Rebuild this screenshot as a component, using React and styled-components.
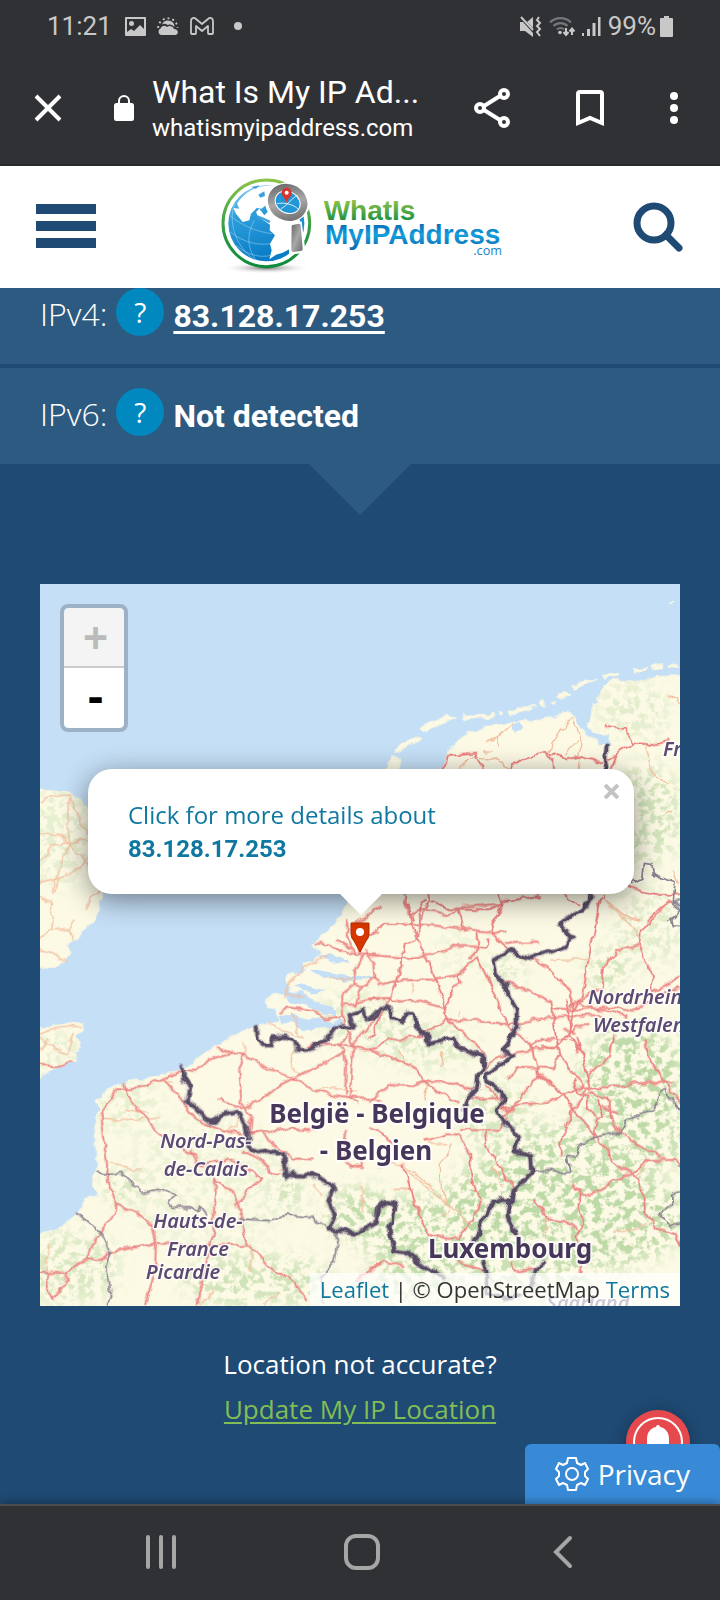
import React from "react";
import styled, { createGlobalStyle } from "styled-components";

const c = {
  chrome: "#303135",
  status: "#c8c8c8",
  navy: "#1f4a73",
  panel: "#2d5a80",
  blue: "#0088bf",
  link: "#0f78a0",
  green: "#82bd56",
};

const Global = createGlobalStyle`
  * { box-sizing: border-box; }
  html, body { margin: 0; padding: 0; }
  body { background: ${c.navy}; font-family: "Open Sans", "Noto Sans", sans-serif; color: #fff; }
  button { border: 0; padding: 0; background: none; font: inherit; color: inherit; cursor: pointer; }
  p, dl, dt, dd { margin: 0; }
  svg { display: block; }
`;

const Screen = styled.div`
  display: flex;
  flex-direction: column;
  min-height: 100vh;
`;

const Chrome = styled.header`
  background: ${c.chrome};
  border-bottom: 2px solid #28292c;
  font-family: Roboto, "Liberation Sans", sans-serif;
`;

const StatusBar = styled.div`
  display: flex;
  align-items: center;
  height: 50px;
  padding: 2px 47px 0 47px;
  color: ${c.status};
  font-size: 26px;
  line-height: 32px;
`;

const StatusIcons = styled.div`
  display: flex;
  align-items: center;
  gap: ${(p) => p.$gap}px;
  margin-left: ${(p) => (p.$end ? "auto" : "13px")};
`;

const BatteryLevel = styled.span`
  display: flex;
  align-items: center;
  gap: 4px;
`;

const Toolbar = styled.div`
  display: flex;
  align-items: center;
  height: 114px;
  padding: 2px 42px 0 34px;
`;

const SiteInfo = styled.button`
  display: flex;
  align-items: center;
  margin-left: 52px;
  margin-right: 18px;
`;

const Titles = styled.div`
  flex: 1;
  min-width: 0;
  padding-top: 2px;
`;

const PageTitle = styled.div`
  font-size: 32px;
  line-height: 38px;
  white-space: nowrap;
`;

const PageHost = styled.div`
  font-size: 24px;
  line-height: 34px;
`;

const Actions = styled.div`
  display: flex;
  align-items: center;
  gap: 66px;
`;

const SiteHeader = styled.div`
  display: flex;
  align-items: center;
  justify-content: space-between;
  height: 122px;
  padding: 0 37px 0 36px;
  background: #fff;
`;

const Bars = styled.button`
  display: flex;
  flex-direction: column;
  gap: 7px;
  width: 60px;
  margin-top: -2px;
`;

const Bar = styled.span`
  height: 10px;
  background: ${c.navy};
`;

const LogoArt = styled.svg`
  margin-right: 10px;
`;

const Content = styled.main`
  position: relative;
  flex: 1;
  display: flex;
  flex-direction: column;
`;

const Addresses = styled.dl`
  display: flex;
  flex-direction: column;
  gap: 4px;
`;

const AddressRow = styled.div`
  display: flex;
  align-items: center;
  gap: 9px;
  padding: ${(p) => (p.$first ? 0 : 20)}px 40px 28px;
  background: ${c.panel};
  line-height: 48px;
`;

const AddressLabel = styled.dt`
  padding-top: 4px;
  font-size: 32px;
  line-height: 44px;
  font-weight: 350;
`;

const Help = styled.button`
  width: 48px;
  height: 48px;
  border-radius: 50%;
  background: ${c.blue};
  font-size: 28px;
  line-height: 48px;
`;

const AddressValue = styled.dd`
  padding-top: 8px;
  font-family: Roboto, "Liberation Sans", sans-serif;
  font-size: 32px;
  line-height: 40px;
  font-weight: 700;
  a {
    color: inherit;
    text-decoration-thickness: 3px;
    text-underline-offset: 4px;
    text-decoration-skip-ink: none;
  }
`;

const Arrow = styled.div`
  align-self: center;
  width: 102px;
  height: 51px;
  background: ${c.panel};
  clip-path: polygon(0 0, 100% 0, 50% 100%);
`;

const MapBox = styled.section`
  position: relative;
  height: 722px;
  margin: 69px 40px 0;
  overflow: hidden;
  background: #c5dff6;
`;

const MapArt = styled.svg`
  width: 100%;
  height: 100%;
`;

const ZoomControl = styled.div`
  position: absolute;
  top: 20px;
  left: 20px;
  display: flex;
  flex-direction: column;
  border: 4px solid rgba(0, 0, 0, 0.2);
  border-radius: 8px;
  background-clip: padding-box;
`;

const ZoomButton = styled.button`
  width: 60px;
  height: 60px;
  padding-left: 3px;
  background: #fff;
  color: #000;
  font-family: "DejaVu Sans Mono", monospace;
  font-size: 40px;
  line-height: 58px;
  font-weight: 700;
  border-radius: 0 0 5px 5px;
  &:first-child {
    border-bottom: 2px solid #ccc;
    border-radius: 5px 5px 0 0;
  }
  &:disabled {
    background: #f4f4f4;
    color: #bbb;
  }
`;

const Popup = styled.div`
  position: absolute;
  top: 185px;
  left: 50%;
  width: 546px;
  max-width: 90%;
  padding: 28px 40px 27px;
  margin-left: 1px;
  transform: translateX(-50%);
  border-radius: 24px;
  background: #fff;
  box-shadow: 0 6px 28px rgba(0, 0, 0, 0.45);
  &::after {
    content: "";
    position: absolute;
    top: 100%;
    left: 50%;
    width: 44px;
    height: 22px;
    margin: -1px 0 0 -22px;
    background: #fff;
    clip-path: polygon(0 0, 100% 0, 50% 100%);
  }
`;

const PopupLink = styled.a`
  display: block;
  color: ${c.link};
  font-size: 24px;
  line-height: 35px;
  text-decoration: none;
  strong {
    display: block;
    font-family: Roboto, "Liberation Sans", sans-serif;
    font-size: 24px;
  }
`;

const PopupClose = styled.button`
  position: absolute;
  top: 15px;
  right: 15px;
`;

const Marker = styled.svg`
  position: absolute;
  top: 338px;
  left: 50%;
  width: 20px;
  height: 32px;
  margin-left: -10px;
`;

const Attribution = styled.div`
  position: absolute;
  right: 0;
  bottom: 0;
  padding: 0 10px;
  background: rgba(255, 255, 255, 0.7);
  color: #333;
  font-size: 22px;
  line-height: 33px;
  white-space: nowrap;
  a { color: ${c.link}; text-decoration: none; }
`;

const Accuracy = styled.div`
  padding: 36px 20px 64px;
  text-align: center;
  font-size: 26px;
  line-height: 45px;
  a { color: ${c.green}; text-underline-offset: 3px; }
`;

const Alerts = styled.button`
  position: absolute;
  right: 30px;
  bottom: 30px;
  border-radius: 50%;
  box-shadow: 0 2px 16px rgba(0, 0, 0, 0.3);
`;

const Privacy = styled.button`
  position: absolute;
  right: 0;
  bottom: 0;
  display: flex;
  align-items: center;
  gap: 9px;
  height: 60px;
  padding: 0 30px;
  border-radius: 6px 6px 0 0;
  background: #388ad6;
  font-size: 28px;
`;

const NavBar = styled.nav`
  position: relative;
  display: grid;
  grid-template-columns: repeat(3, 1fr);
  place-items: center;
  height: 96px;
  padding: 0 57px 2px 60px;
  border-top: 2px solid #4a4c4e;
  background: ${c.chrome};
  box-shadow: 0 -2px 8px rgba(0, 0, 0, 0.3);
`;

const Country = styled.text`
  font: 700 26px "Noto Sans", "Open Sans", sans-serif;
  text-anchor: middle;
  fill: #46365a;
  stroke: rgba(255, 255, 255, 0.8);
  stroke-width: 4px;
  stroke-linejoin: round;
  paint-order: stroke;
`;

const Region = styled(Country)`
  font: italic 600 20px "Noto Sans", "Open Sans", sans-serif;
  text-anchor: ${(p) => (p.$start ? "start" : "middle")};
  fill: #5d4a72;
  stroke-width: 3px;
`;

/* Map geometry is drawn at three units per pixel, one sheet per quarter of the map. */
const sheets = [
  {
    at: "translate(0 -12)",
    minor: [
      "M0 665 30 650 90 645 80 700 85 790 50 890 38 935 M0 758 60 765 80 790 144 778 M0 840 35 800 80 790 M90 650 110 700 140 760 M80 790 150 855 M0 910 60 895 110 870 144 835 M60 895 45 930 M0 950 40 975 M135 985 180 920",
    ],
    major: [],
    border: [],
    region: [],
  },
  {
    at: "translate(1020 -12)",
    minor: [
      "M582 410 535 460 510 515 M585 415 600 480 595 565 M322 488 355 470 400 430 M355 470 358 495 M312 512 335 514 M235 565 280 530 M300 536 345 537 385 562 M590 480 560 525 M800 500 C803 575 825 603 862 605 M865 345 885 352 898 380 M880 870 895 910 M680 965 730 1005 780 1020 M850 710 875 695",
    ],
    major: [
      "M188 567 205 525 285 518 305 565 M380 567 430 535 500 518 560 538 610 528 660 547 700 535 715 515 760 490 735 447 695 443 Q670 440 680 435 M500 518 520 545 522 567 M760 490 820 498 862 482 M695 567 710 530 M75 940 80 990 100 1020 M145 945 150 960 205 985 335 988 365 965 480 948 M125 1020 150 960 M355 940 362 970 345 1020 M560 945 565 960 595 970 M740 915 790 935 830 945 900 943 M875 965 840 985 805 1020 M670 945 655 975 650 1020 M232 988 245 1020",
    ],
    border: ["M680 500 675 540 680 570 M632 940 630 955"],
    region: ["M758 910 785 895 790 850 815 853 820 880 865 900 885 905 880 965 890 975 900 978 M868 1020 890 1005"],
  },
  {
    at: "translate(0 948)",
    minor: [
      "M30 0 40 50 35 90 0 115 M35 90 85 85 100 120 M85 85 105 60 M0 150 30 155 80 190 M0 400 60 380 125 380 M0 415 80 465 100 395 M0 450 25 415 M185 655 300 660 355 655 M210 785 250 805 300 812 M255 625 320 635 M370 540 400 545 M735 290 750 250 790 200 870 165 M735 285 795 290 M760 340 775 400 M870 240 940 235 M690 365 720 395 790 410 M760 450 755 500 780 530 M610 425 612 465 M635 1035 630 1115 M25 1035 20 1120 M670 1210 720 1175 M480 1210 525 1170 M965 860 970 940 M735 780 720 810 M550 690 590 680 600 640 M820 850 845 880 M830 570 870 560 950 575",
    ],
    major: [
      "M425 512 360 540 300 562 230 568 188 630 182 655 190 720 200 780 205 860 228 912 220 945 190 980 150 1045 140 1078 85 1110 60 1122 0 1118",
      "M250 550 262 588 300 630 350 690 372 708 440 755 468 760 475 775",
      "M372 540 420 590 450 640 490 670 545 690 610 705 M425 512 470 512 485 495 520 475 575 458 620 470 690 508 760 535 825 572 900 588 930 592 1022 600",
      "M535 445 575 458 M612 468 598 505 605 620 M535 597 575 612 608 625 660 605 720 555 780 525 850 490 912 458 M608 625 635 650 630 700 690 695 760 685 820 688 M630 705 665 695 700 735 755 775 815 778 M608 755 660 775 685 800 690 825 720 820",
      "M228 912 290 940 335 975 348 1030 270 1045 215 1055 180 1080 140 1078 M348 1025 430 1035 618 1035 M525 838 520 990 490 1130 470 1215 M525 838 580 880 605 940 608 985 622 1030 690 1100 780 1160 798 1205 M585 915 660 835 M348 1030 345 1110 318 1215 M200 1075 185 1080",
      "M455 750 475 800 560 775 640 815 660 835 M0 495 60 500 95 485 M20 1120 25 1175 40 1200 M80 1115 80 1145 40 1195",
      "M832 128 870 130 905 155 1020 165 M890 120 940 150 M925 60 920 110 945 155 M960 158 965 110 1020 92 M1020 20 940 75 M975 150 1000 190 1003 235 965 262 940 252 940 225 970 165 M940 252 910 285 908 330 912 380 940 440 935 500 930 590 955 610 M1003 235 1020 245 M965 262 945 315 M720 340 738 322 820 330 858 355 905 350 M912 320 960 305 1020 293 M800 440 880 430 930 440 1020 455 M930 440 1005 360 1020 320 M918 410 900 435 912 455 918 500 915 580 M940 800 905 780 920 690 M930 800 965 800 965 775 M1020 1090 950 1140",
    ],
    border: [
      "M650 378 653 420 665 435 690 436 695 415 735 413 765 428 772 453 805 452 860 422 890 382 M900 378 940 386 928 345 970 330 978 355 1010 352 1025 325",
      "M428 503 432 540 448 555 440 605 470 625 495 655 515 668 528 665 540 645 585 634 605 650 620 680 628 720 630 748 660 757 680 748 730 768 738 835 755 822 830 826 850 840 885 862 865 900 885 945 865 985 950 998 1005 972 1010 930 1022 920",
    ],
    region: [
      "M170 813 190 825 240 820 265 840 305 880 380 872 410 885 385 905 395 922 450 920 480 938 478 915 500 945 M600 957 690 962 740 945 820 952 830 970 885 985 895 1020 885 1085 845 1130 850 1215 M112 940 185 1000 212 1060 200 1100 208 1175 215 1185 205 1215",
    ],
  },
  {
    at: "translate(990 948)",
    minor: [
      "M125 245 128 280 M20 800 100 790 190 865 M160 720 230 740 M245 735 210 800 215 870 240 930 M100 800 170 860 300 970 M215 950 240 930 M70 865 130 865 M540 180 660 175 M700 0 780 70 805 110 M830 975 780 990 735 1000 M215 500 220 450 M90 450 105 490 M525 960 530 1010 M175 540 165 600 M400 860 370 800 M270 335 260 345 M800 830 830 800 M840 780 820 810",
    ],
    major: [
      "M0 105 40 72 135 72 230 80 330 92 M105 0 120 50 140 115 178 190 200 240 228 325 235 360 290 410 345 462 M140 118 105 135 85 220 62 290 32 350 0 415 M155 65 150 30 165 0 M155 65 140 115 M120 50 150 30 230 45 280 20 390 12 395 0 M0 165 90 172 185 165 260 138 350 140 352 115 M320 98 322 150 300 175 M325 95 360 98 400 135 430 160 490 178 550 215 595 270 610 320 600 400 640 470 662 560 M270 30 280 90 M395 10 365 80 370 105 410 92 M410 130 440 125 502 125",
      "M25 255 100 238 200 235 265 225 320 170 355 240 385 310 420 385 482 430 492 470 505 522 570 570 M0 295 62 298 150 305 228 325 M228 325 250 260 272 250 265 225 M145 408 235 358 320 360 400 375 550 350 700 345 M0 450 60 420 160 408 M0 452 60 470 140 510 180 560 260 610 M0 605 60 555 120 558 180 540 320 565 M345 510 360 480 420 460 560 440 620 380 650 375",
      "M385 240 460 265 545 305 560 440 570 460 620 540 660 570 M415 530 450 500 550 505 570 465 M392 628 440 615 540 605 610 570 645 560 M400 650 440 610 505 525 570 570 620 640 690 720 718 755 722 795 790 818 M572 770 575 710 615 620 650 570 M485 440 520 415 590 420 M510 440 560 440 M580 390 620 395",
      "M692 0 672 100 655 180 640 280 612 330 M900 0 860 45 812 95 808 135 740 150 702 200 695 260 600 320 M808 135 845 220 848 275 930 230 M545 325 640 330 720 320 790 335 870 280 930 265 M625 300 640 320 730 335 770 350 M588 300 600 385 M650 525 720 470 730 400 M625 410 655 540 M820 415 845 490 885 545 930 605 M655 562 730 562 800 550 910 543",
      "M610 540 620 575 655 590 650 630 690 655 M660 580 715 595 720 650 740 685 800 730 870 772 M690 600 700 650 680 660 670 720 M700 620 742 635 M790 818 840 780 915 780 930 795 M790 818 725 840 700 870 630 888 610 855 M630 888 620 925 640 970 622 1010 635 1115 M790 818 818 870 825 930 860 985 915 1000 930 1040 M490 893 528 952 580 965 620 985 M620 460 630 440 600 420",
      "M100 790 130 900 175 1000 260 1020 310 960 327 900 305 840 300 760 262 700 230 700 160 722 M345 700 350 740 378 780 410 840 440 868 M270 690 390 692 410 655 M300 595 395 595 M0 1118 40 1080 95 1095 M265 1085 350 1115 M0 685 40 700 65 735 M420 1085 440 1115 500 1105 M345 560 390 595 400 630 430 628",
    ],
    border: [
      "M0 355 30 325 62 325 60 355 100 362 112 335 132 340 135 375 172 408 175 428 250 415 270 445 340 470 338 510 322 525 318 570 290 600 283 625",
      "M668 -8 625 35 605 45 570 75 605 108 590 142 520 160 485 175 418 152 368 182 375 220 410 258 415 285 440 330 440 380 400 450 430 465 400 490 350 522 352 545 400 575 400 605 380 630 400 665 450 710 430 750 480 765 485 825 430 870 425 905 375 900 345 950 310 1025 M418 900 412 945 430 985 445 1008 M0 975 20 968 28 925 55 903 78 908 58 985 72 1055 110 1060 160 1100 195 1115 225 1140 M340 1085 352 1130 350 1170 M522 1088 490 1115 485 1160 M350 1180 400 1195 450 1185",
    ],
    region: [
      "M490 815 545 808 580 822 600 820 592 770 620 768 630 740 665 715 740 698 755 695 765 665 850 630 870 575 890 572 895 590 915 605 930 640 M930 875 905 885 908 915 870 945 900 980 930 975 M930 0 905 10 930 30 905 60 910 80 930 75 M930 800 922 798",
    ],
  },
];

const land = [
  "M1960 273 1850 278 1790 293 1770 289 1720 290 1690 308 1672 338 1685 360 1658 363 1648 433 1662 448 1710 450 1712 488 1672 488 1668 466 1635 448 1622 430 1612 398 1570 390 1500 408 1420 416 1340 428 1270 458 1222 508 1205 560 1180 700 1100 700 1070 560 1078 533 1060 518 1035 553 1020 720 985 850 925 958 880 1028 835 1068 822 1078 840 1108 825 1130 790 1138 795 1160 745 1175 740 1190 755 1215 740 1235 700 1228 675 1253 705 1285 715 1312 690 1313 650 1328 600 1343 520 1393 425 1458 340 1478 230 1503 195 1530 170 1548 180 1573 164 1608 170 1728 158 1803 180 1833 145 1838 115 1888 50 1938 -40 1961 -40 2206 1960 2206Z",
  "M-40 608 80 623 120 648 160 700 190 850 180 948 178 985 165 1013 130 1038 100 1073 75 1085 90 1105 75 1133 35 1151 -40 1138Z",
  "M-40 1343 60 1323 128 1316 130 1338 105 1350 120 1388 108 1428 70 1445 20 1463 -40 1515Z",
  "M1062 505 1080 480 1130 460 1140 470 1105 485 1075 503ZM1142 432 1165 415 1220 398 1250 402 1205 420 1150 443ZM1272 388 1300 395 1365 388 1362 398 1290 405 1270 402ZM1408 382 1440 370 1490 366 1450 382 1410 395ZM1498 355 1513 348 1515 362 1502 364ZM1550 328 1575 322 1592 330 1572 345 1548 336ZM1600 305 1630 290 1672 286 1640 298 1605 314ZM1688 274 1735 268 1740 274 1695 282ZM1775 256 1820 250 1818 258 1780 268ZM1830 248 1868 240 1865 250 1835 255ZM1880 238 1910 238 1914 248 1885 243ZM1535 356 1542 352 1542 362ZM1380 388 1390 387 1388 393ZM1885 56 1898 55 1895 60Z",
];

const inlets =
  "M712 1295 770 1292 800 1305 850 1300 880 1318 900 1300 905 1325 870 1335 830 1330 795 1345 755 1318 720 1318ZM735 1228 790 1225 830 1258 875 1268 895 1298 850 1290 800 1262 745 1252ZM755 1210 800 1202 850 1215 828 1232 780 1220ZM800 1160 850 1155 880 1170 950 1178 1015 1185 960 1190 880 1190 845 1178ZM822 1120 870 1112 920 1130 930 1140 870 1130ZM1080 905 1100 915 1095 935 1078 925ZM1410 425 1440 415 1450 430 1420 445Z";

const forests = [
  [1440, 1860, 230, 150, 1], [1180, 1960, 210, 130, 0.9], [1780, 1480, 160, 160, 1],
  [1700, 1900, 230, 150, 1], [1620, 1720, 200, 110, 0.9], [1850, 1640, 90, 120, 0.9],
  [1370, 1600, 110, 110, 0.6], [1480, 2080, 190, 70, 0.8], [960, 1890, 110, 80, 0.9],
  [1820, 690, 110, 150, 0.65], [1780, 380, 110, 90, 0.4], [1150, 1380, 160, 70, 0.5],
  [1400, 1160, 50, 40, 0.8], [1700, 1160, 60, 60, 0.8], [1830, 1030, 110, 120, 0.4],
  [90, 2050, 150, 110, 0.55], [260, 1560, 110, 90, 0.3], [650, 2090, 230, 80, 0.7],
  [750, 1830, 40, 40, 1], [240, 1810, 50, 40, 0.8], [500, 1800, 260, 200, 0.22],
  [60, 750, 100, 160, 0.35], [950, 1300, 120, 80, 0.4], [50, 1400, 80, 60, 0.35],
  [1100, 2110, 150, 50, 0.9], [1260, 1100, 70, 80, 0.2],
];

function Lines({ d, ...rest }) {
  return d.map((path) => <path key={path} d={path} {...rest} />);
}

function MapDrawing() {
  return (
    <MapArt viewBox="0 0 640 722" preserveAspectRatio="xMidYMid slice" role="img" aria-label="Map of the Low Countries">
      <defs>
        <filter id="woods" x="0" y="0" width="100%" height="100%" colorInterpolationFilters="sRGB">
          <feTurbulence type="fractalNoise" baseFrequency="0.13" numOctaves="4" seed="11" />
          <feColorMatrix values="0 0 0 0 0.74  0 0 0 0 0.85  0 0 0 0 0.65  6 0 0 0 -2.7" />
        </filter>
        <filter id="wander" filterUnits="userSpaceOnUse" x="-20" y="-20" width="680" height="762">
          <feTurbulence type="fractalNoise" baseFrequency="0.09" numOctaves="2" seed="4" result="noise" />
          <feDisplacementMap in="SourceGraphic" in2="noise" scale="8" xChannelSelector="R" yChannelSelector="G" />
        </filter>
        <filter id="feather"><feGaussianBlur stdDeviation="30" /></filter>
        <clipPath id="coast">
          <path transform="scale(0.333333)" d={land.slice(0, 3).join("")} />
        </clipPath>
        <mask id="forestMask" maskUnits="userSpaceOnUse" x="0" y="0" width="640" height="722">
          <g transform="scale(0.333333)" filter="url(#feather)">
            {forests.map(([x, y, rx, ry, o]) => (
              <ellipse key={`${x}-${y}`} cx={x} cy={y} rx={rx} ry={ry} fill="#fff" opacity={o} />
            ))}
          </g>
        </mask>
      </defs>
      <rect width="640" height="722" fill="#c5dff6" />
      <g filter="url(#wander)">
        <g transform="scale(0.333333)">
          <Lines d={land} fill="#fcfae5" stroke="#f3f4e3" strokeWidth="4" strokeLinejoin="round" />
        </g>
      </g>
      <g clipPath="url(#coast)">
        <g mask="url(#forestMask)"><rect width="640" height="722" filter="url(#woods)" /></g>
      </g>
      <g filter="url(#wander)">
        <g transform="scale(0.333333)" fill="none" strokeLinejoin="round" strokeLinecap="round">
          <path d={inlets} fill="#c5dff6" />
          {sheets.map((s) => (
            <g key={s.at} transform={s.at}>
              <Lines d={s.minor} stroke="#f3bfa0" strokeWidth="4" />
              <Lines d={s.major} stroke="#f2a29a" strokeWidth="8" opacity="0.6" />
              <Lines d={s.major} stroke="#ea8080" strokeWidth="4" />
              <Lines d={s.region} stroke="#8b8191" strokeWidth="5" />
              <Lines d={s.border} stroke="#8d8296" strokeWidth="18" opacity="0.45" />
              <Lines d={s.border} stroke="#574b63" strokeWidth="11" />
            </g>
          ))}
        </g>
      </g>
      <Country x="337" y="539">België - Belgique</Country>
      <Country x="336" y="576">- Belgien</Country>
      <Country x="470" y="674">Luxembourg</Country>
      <Region x="166" y="564">Nord-Pas-</Region>
      <Region x="166" y="592">de-Calais</Region>
      <Region x="158" y="644">Hauts-de-</Region>
      <Region x="158" y="672">France</Region>
      <Region x="143" y="695">Picardie</Region>
      <Region $start x="548" y="420">Nordrhein-</Region>
      <Region $start x="553" y="448">Westfalen</Region>
      <Region $start x="623" y="172">Friesland</Region>
      <Region x="548" y="726">Saarland</Region>
    </MapArt>
  );
}

function Logo() {
  return (
    <LogoArt width="290" height="110" viewBox="42 20 870 330" role="img" aria-label="WhatIsMyIPAddress.com">
      <defs>
        <linearGradient id="ring" x1="0" y1="0" x2="0" y2="1">
          <stop offset="0" stopColor="#8bc34a" /><stop offset="0.6" stopColor="#2f9b45" /><stop offset="1" stopColor="#0d8a3c" />
        </linearGradient>
        <linearGradient id="sea" x1="0" y1="0" x2="0.3" y2="1">
          <stop offset="0" stopColor="#9fd4f2" /><stop offset="0.4" stopColor="#2e9fdc" /><stop offset="1" stopColor="#0a7cc6" />
        </linearGradient>
        <linearGradient id="steel" x1="0" y1="0" x2="1" y2="1">
          <stop offset="0" stopColor="#666" /><stop offset="0.5" stopColor="#a8a8a8" /><stop offset="1" stopColor="#6b6b6b" />
        </linearGradient>
        <linearGradient id="wordTop" x1="0" y1="0" x2="0" y2="1">
          <stop offset="0.2" stopColor="#8cc247" /><stop offset="0.9" stopColor="#118c43" />
        </linearGradient>
        <linearGradient id="wordBottom" x1="0" y1="0" x2="0" y2="1">
          <stop offset="0.1" stopColor="#0b64ae" /><stop offset="0.5" stopColor="#12a0dd" /><stop offset="1" stopColor="#0b64ae" />
        </linearGradient>
        <radialGradient id="ground"><stop offset="0" stopColor="#777" /><stop offset="1" stopColor="#fff" stopOpacity="0" /></radialGradient>
      </defs>
      <ellipse cx="196" cy="308" rx="135" ry="17" fill="url(#ground)" />
      <circle cx="196" cy="174" r="130" fill="#fff" stroke="url(#ring)" strokeWidth="9" />
      <circle cx="196" cy="174" r="114" fill="url(#sea)" />
      <path fill="#fff" d="M115 105 C150 62 205 50 245 72 L265 100 290 140 300 180 285 230 265 252 245 262 225 268 205 282 212 255 207 235 222 210 206 195 207 178 192 168 172 156 165 140 175 130 190 150 202 138 194 120 182 130 167 128 150 145 145 165 125 170 105 145 97 128 115 130 108 115Z" />
      <path fill="#3f9fdb" d="M172 88 190 78 192 92 178 97ZM170 150 190 158 208 166 205 174 188 164 170 160ZM150 65 175 60 165 70Z" />
      <g fill="none" stroke="#b5dff5" strokeWidth="2" opacity="0.7">
        <path d="M100 115 C80 180 110 250 160 282 M160 165 C135 210 140 250 165 284 M88 200 C130 235 180 240 210 235 M86 150 C120 180 170 200 212 205 M105 240 C140 270 180 278 210 270" />
      </g>
      <ellipse cx="260" cy="111" rx="68" ry="60" fill="#fff" />
      <ellipse cx="260" cy="111" rx="49" ry="43" fill="#2297d8" stroke="url(#steel)" strokeWidth="23" transform="rotate(28 260 111)" />
      <ellipse cx="260" cy="111" rx="39" ry="32" fill="none" stroke="#fff" strokeWidth="3" transform="rotate(28 260 111)" />
      <path fill="none" stroke="#fff" strokeWidth="3" opacity="0.8" d="M228 115 C250 110 280 118 292 132 M240 130 C260 120 275 95 290 90" />
      <path d="M264 176 302 168 314 262 264 268Z" fill="#fff" />
      <path d="M272 183 Q272 179 278 178 L294 175 Q298 175 299 180 L305 250 Q305 257 299 257 L277 260 Q271 260 271 254Z" fill="url(#steel)" />
      <path d="M257 112 C253 98 242 94 242 82 A15 15 0 0 1 272 82 C272 94 261 98 257 112Z" fill="#d9342b" />
      <circle cx="257" cy="82" r="6" fill="#fff" />
      <g fontFamily="'Liberation Sans', Arial, sans-serif">
        <text x="368" y="163" fontSize="84" fontWeight="700" fill="url(#wordTop)">WhatIs</text>
        <text x="372" y="237" fontSize="84" fontWeight="700" fill="url(#wordBottom)">MyIPAddress</text>
        <text x="903" y="270" fontSize="38" textAnchor="end" fill="#1583c6" fontFamily="'Open Sans', sans-serif">.com</text>
      </g>
    </LogoArt>
  );
}

function NotificationIcons() {
  return (
    <StatusIcons $gap={11}>
      <svg width="21" height="19" viewBox="0 0 21 19">
        <path fill={c.status} fillRule="evenodd" d="M1 0h19a1 1 0 0 1 1 1v17a1 1 0 0 1-1 1H1a1 1 0 0 1-1-1V1a1 1 0 0 1 1-1ZM2 2v13l4-3 3 2 6-6 4 4V2ZM6.500 4a2.500 2.500 0 1 1 0 5 2.500 2.500 0 0 1 0-5Z" />
      </svg>
      <svg width="22" height="20" viewBox="0 0 22 20">
        <path fill={c.status} d="M4 19a3.500 3.500 0 0 1-.5-6.500C5 9 8 9 10 11c2-2 6-1 7 2 5 0 5 6 1 6Z" />
        <path fill={c.status} d="M5 8.500A6.500 6.500 0 0 1 17.500 11C15 8 12 8 10.500 9 9 7.500 7 7.500 5 8.500Z" />
        <path stroke={c.status} strokeWidth="1.800" strokeDasharray="2 2.900" fill="none" d="M1.200 12A9.500 9.500 0 0 1 20.500 12" />
      </svg>
      <svg width="24" height="19" viewBox="0 0 24 19">
        <path fill="none" stroke={c.status} strokeWidth="1.800" strokeLinejoin="round" d="M1 16V4C1 1 4 0 6 2l6 5 6-5c2-2 5-1 5 2v12q0 1-1 1h-3q-1 0-1-1V9l-6 5-6-5v7q0 1-1 1H2q-1 0-1-1Z" />
      </svg>
      <svg width="32" height="8" viewBox="0 0 32 8"><circle cx="13" cy="4" r="4" fill={c.status} /></svg>
    </StatusIcons>
  );
}

function SystemIcons() {
  return (
    <StatusIcons $gap={7} $end>
      <svg width="22" height="21" viewBox="0 0 22 21">
        <path fill={c.status} d="M0 6h3L13 17v4L5 15H0ZM13 1v11L7 6Z" />
        <path stroke={c.status} strokeWidth="2" fill="none" d="M1 1 13 14M19 1l-2 3 3 3-3 3 3 3-3 3 3 4" />
      </svg>
      <svg width="26" height="21" viewBox="0 0 26 21" fill="none">
        <path stroke="#76777a" strokeWidth="2.200" d="M1 6.500a15 15 0 0 1 21 0M4.500 10a10 10 0 0 1 14 0M8 13.500a5 5 0 0 1 7 0" />
        <circle cx="11" cy="16.500" r="1.800" fill={c.status} />
        <path stroke={c.status} strokeWidth="2" d="M17 12v6M14.500 16l2.500 3 2.500-3M23 19v-6M20.500 15.500 23 12.500l2.500 3" />
      </svg>
      <svg width="19" height="19" viewBox="0 0 19 19" fill={c.status}>
        <path d="M0 16h2v3H0ZM5 12h3v7H5ZM10.500 6h3v13h-3ZM16 0h2.500v19H16Z" />
      </svg>
      <BatteryLevel>
        99%
        <svg width="13" height="21" viewBox="0 0 13 21" fill={c.status}>
          <path d="M4 0h5v2h3a1 1 0 0 1 1 1v17a1 1 0 0 1-1 1H1a1 1 0 0 1-1-1V3a1 1 0 0 1 1-1h3Z" />
        </svg>
      </BatteryLevel>
    </StatusIcons>
  );
}

export default function App() {
  return (
    <Screen>
      <Global />
      <Chrome>
        <StatusBar>
          <span>11:21</span>
          <NotificationIcons />
          <SystemIcons />
        </StatusBar>
        <Toolbar>
          <button aria-label="Close">
            <svg width="28" height="28" viewBox="0 0 28 28"><path d="M2 2 26 26M26 2 2 26" stroke="#fff" strokeWidth="4" /></svg>
          </button>
          <SiteInfo aria-label="Connection is secure">
            <svg width="20" height="26" viewBox="0 0 20 26">
              <rect y="8" width="20" height="18" rx="2.500" fill="#fff" />
              <path d="M5 9V6a5 5 0 0 1 10 0v3" fill="none" stroke="#fff" strokeWidth="2" />
            </svg>
          </SiteInfo>
          <Titles>
            <PageTitle>What Is My IP Ad...</PageTitle>
            <PageHost>whatismyipaddress.com</PageHost>
          </Titles>
          <Actions>
            <button aria-label="Share">
              <svg width="36" height="40" viewBox="0 0 36 40" fill="none" stroke="#fff" strokeWidth="4">
                <path d="M26 8 10 18M10 22l16 10" />
                <circle cx="30" cy="6" r="4" /><circle cx="6" cy="20" r="4" /><circle cx="30" cy="34" r="4" />
              </svg>
            </button>
            <button aria-label="Bookmark">
              <svg width="28" height="36" viewBox="0 0 28 36" fill="none" stroke="#fff" strokeWidth="4">
                <path d="M2 33V4a2 2 0 0 1 2-2h20a2 2 0 0 1 2 2v29l-12-5Z" />
              </svg>
            </button>
            <button aria-label="More">
              <svg width="8" height="32" viewBox="0 0 8 32" fill="#fff">
                <circle cx="4" cy="4" r="4" /><circle cx="4" cy="16" r="4" /><circle cx="4" cy="28" r="4" />
              </svg>
            </button>
          </Actions>
        </Toolbar>
      </Chrome>

      <SiteHeader>
        <Bars aria-label="Menu"><Bar /><Bar /><Bar /></Bars>
        <Logo />
        <button aria-label="Search">
          <svg width="50" height="50" viewBox="0 0 50 50" fill="none" stroke={c.navy}>
            <circle cx="21" cy="21" r="17" strokeWidth="7" />
            <path d="M33 33 46 46" strokeWidth="7" strokeLinecap="round" />
          </svg>
        </button>
      </SiteHeader>

      <Content>
        <Addresses>
          <AddressRow $first>
            <AddressLabel>IPv4:</AddressLabel>
            <Help aria-label="About IPv4">?</Help>
            <AddressValue><a href="#ipv4">83.128.17.253</a></AddressValue>
          </AddressRow>
          <AddressRow>
            <AddressLabel>IPv6:</AddressLabel>
            <Help aria-label="About IPv6">?</Help>
            <AddressValue>Not detected</AddressValue>
          </AddressRow>
        </Addresses>
        <Arrow />

        <MapBox>
          <MapDrawing />
          <ZoomControl>
            <ZoomButton disabled aria-label="Zoom in">+</ZoomButton>
            <ZoomButton aria-label="Zoom out">-</ZoomButton>
          </ZoomControl>
          <Marker viewBox="0 0 20 32">
            <path d="M1 1h18v11q0 4-3 7L10 30 4 19Q1 16 1 12Z" fill="#d63600" stroke="#b52d00" />
            <circle cx="10" cy="10" r="4" fill="#fff" />
          </Marker>
          <Popup>
            <PopupLink href="#details">
              Click for more details about <strong>83.128.17.253</strong>
            </PopupLink>
            <PopupClose aria-label="Close popup">
              <svg width="15" height="15" viewBox="0 0 15 15"><path d="M1 1 14 14M14 1 1 14" stroke="#c3c3c3" strokeWidth="4" /></svg>
            </PopupClose>
          </Popup>
          <Attribution>
            <a href="#leaflet">Leaflet</a> | © OpenStreetMap <a href="#terms">Terms</a>
          </Attribution>
        </MapBox>

        <Accuracy>
          <p>Location not accurate?</p>
          <p><a href="#update">Update My IP Location</a></p>
        </Accuracy>

        <Alerts aria-label="Notifications">
          <svg width="64" height="64" viewBox="0 0 64 64">
            <circle cx="32" cy="32" r="32" fill="#e5484d" />
            <circle cx="32" cy="32" r="24" fill="none" stroke="#fff" strokeWidth="2" />
            <path d="M30 17a2 2 0 0 1 4 0c6 1 9 6 9 12v12H21V29c0-6 3-11 9-12Z" fill="#fff" />
          </svg>
        </Alerts>
        <Privacy>
          <svg width="34" height="36" viewBox="0 0 34 36" fill="none" stroke="#fff" strokeWidth="2" strokeLinejoin="round">
            <path d="M13 2h8l1 5 4 2 4-2 3 6-3 3v4l3 3-3 6-4-2-4 2-1 5h-8l-1-5-4-2-4 2-3-6 3-3v-4l-3-3 3-6 4 2 4-2Z" />
            <circle cx="17" cy="18" r="6" />
          </svg>
          Privacy
        </Privacy>
      </Content>

      <NavBar aria-label="System">
        <button aria-label="Recent apps">
          <svg width="32" height="36" viewBox="0 0 32 36" stroke="#a6a6a6" strokeWidth="4" strokeLinecap="round"><path d="M3 3v30M16 3v30M29 3v30" /></svg>
        </button>
        <button aria-label="Home">
          <svg width="36" height="36" viewBox="0 0 36 36"><rect x="2" y="2" width="32" height="32" rx="10" fill="none" stroke="#a6a6a6" strokeWidth="4" /></svg>
        </button>
        <button aria-label="Back">
          <svg width="20" height="34" viewBox="0 0 20 34" fill="none" stroke="#a6a6a6" strokeWidth="4" strokeLinecap="round"><path d="M17 3 3 17l14 14" /></svg>
        </button>
      </NavBar>
    </Screen>
  );
}
